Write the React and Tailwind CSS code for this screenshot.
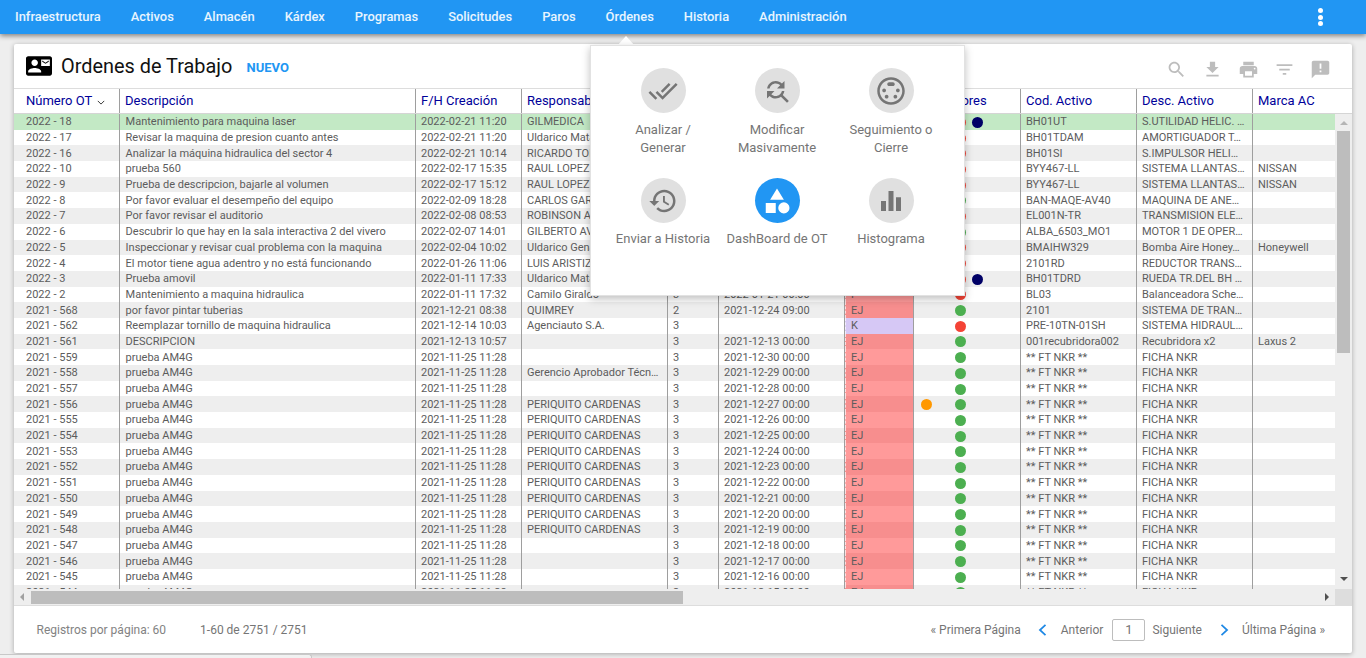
import React from "react";

const P = {
  doneAll: "M18 7l-1.41-1.41-6.34 6.34 1.41 1.41L18 7zm4.24-1.41L11.66 16.17 7.48 12l-1.41 1.41L11.66 19l12-12-1.42-1.41zM.41 13.41L6 19l1.41-1.41L1.83 12 .41 13.41z",
  find: "M11 6c1.38 0 2.63.56 3.54 1.46L12 10h6V4l-2.05 2.05C14.68 4.78 12.93 4 11 4c-3.53 0-6.43 2.61-6.92 6H6.1c.46-2.28 2.48-4 4.9-4zm5.64 9.14c.66-.9 1.12-1.97 1.28-3.14H15.9c-.46 2.28-2.48 4-4.9 4-1.38 0-2.63-.56-3.54-1.46L10 12H4v6l2.05-2.05C7.32 17.22 9.07 18 11 18c1.55 0 2.98-.51 4.14-1.36L20 21.49 21.49 20l-4.85-4.86z",
  svideo: "M8 11.5c0-.83-.67-1.5-1.5-1.5S5 10.67 5 11.5 5.67 13 6.5 13 8 12.33 8 11.5zm7-5c0-.83-.67-1.5-1.5-1.5h-3C9.67 5 9 5.67 9 6.5S9.67 8 10.5 8h3c.83 0 1.5-.67 1.5-1.5zM8.5 15c-.83 0-1.5.67-1.5 1.5S7.67 18 8.5 18s1.5-.67 1.5-1.5S9.33 15 8.5 15zM12 1C5.93 1 1 5.93 1 12s4.93 11 11 11 11-4.93 11-11S18.07 1 12 1zm0 20c-4.96 0-9-4.04-9-9s4.04-9 9-9 9 4.04 9 9-4.04 9-9 9zm5.5-11c-.83 0-1.5.67-1.5 1.5s.67 1.5 1.5 1.5 1.5-.67 1.5-1.5-.67-1.5-1.5-1.5zm-2 5c-.83 0-1.5.67-1.5 1.5s.67 1.5 1.5 1.5 1.5-.67 1.5-1.5-.67-1.5-1.5-1.5z",
  history: "M13 3c-4.97 0-9 4.03-9 9H1l3.89 3.89.07.14L9 12H6c0-3.87 3.13-7 7-7s7 3.13 7 7-3.13 7-7 7c-1.93 0-3.68-.79-4.94-2.06l-1.42 1.42C8.27 19.99 10.51 21 13 21c4.97 0 9-4.03 9-9s-4.03-9-9-9zm-1 5v5l4.28 2.54.72-1.21-3.5-2.08V8H12z",
  category: "M12 2l-5.5 9h11zM17.500 13a4.500 4.500 0 1 0 0 9 4.500 4.500 0 0 0 0-9zM3 13.500h8v8H3z",
  bars: "M10 20h4V4h-4v16zm-6 0h4v-8H4v8zM16 9v11h4V9h-4z",
  search: "M15.5 14h-.79l-.28-.27C15.41 12.59 16 11.11 16 9.5 16 5.91 13.09 3 9.5 3S3 5.91 3 9.5 5.91 16 9.5 16c1.61 0 3.09-.59 4.23-1.57l.27.28v.79l5 4.99L20.49 19l-4.99-5zm-6 0C7.01 14 5 11.99 5 9.5S7.01 5 9.5 5 14 7.01 14 9.5 11.99 14 9.5 14z",
  download: "M19 9h-4V3H9v6H5l7 7 7-7zM5 18v2h14v-2H5z",
  print: "M19 8H5c-1.66 0-3 1.34-3 3v6h4v4h12v-4h4v-6c0-1.66-1.34-3-3-3zm-3 11H8v-5h8v5zm3-7c-.55 0-1-.45-1-1s.45-1 1-1 1 .45 1 1-.45 1-1 1zm-1-9H6v4h12V3z",
  filter: "M10 18h4v-2h-4v2zM3 6v2h18V6H3zm3 7h12v-2H6v2z",
  note: "M20 2H4c-1.1 0-1.99.9-1.99 2L2 22l4-4h14c1.1 0 2-.9 2-2V4c0-1.1-.9-2-2-2zm-7 9h-2V5h2v6zm0 4h-2v-2h2v2z",
  contact: "M21 8V7l-3 2-3-2v1l3 2 3-2zm1-5H2C.9 3 0 3.9 0 5v14c0 1.1.9 2 2 2h20c1.1 0 1.99-.9 1.99-2L24 5c0-1.1-.9-2-2-2zM8 6c1.66 0 3 1.34 3 3s-1.34 3-3 3-3-1.34-3-3 1.34-3 3-3zm6 12H2v-1c0-2 4-3.1 6-3.1s6 1.1 6 3.1v1zm8-6h-8V6h8v6z",
};

const Icon = ({ d, className }) => (
  <svg viewBox="0 0 24 24" className={className} fill="currentColor" aria-hidden="true">
    <path d={d} />
  </svg>
);

const NAV = ["Infraestructura", "Activos", "Almacén", "Kárdex", "Programas", "Solicitudes", "Paros", "Órdenes", "Historia", "Administración"];

const W = ["w-[105px]", "w-[296px]", "w-[106px]", "w-[146px]", "w-[51px]", "w-[126px]", "w-[69px]", "w-[107px]", "w-[116px]", "w-[116px]", "w-[83px]"];

const HEADERS = ["Número OT", "Descripción", "F/H Creación", "Responsable", "Prioridad", "F/H Programada", "Estado", "Indicadores", "Cod. Activo", "Desc. Activo", "Marca AC"];

const top = [
  ["2022 - 18", "Mantenimiento para maquina laser", "2022-02-21 11:20", "GILMEDICA", "BH01UT", "S.UTILIDAD HELIC. …", ""],
  ["2022 - 17", "Revisar la maquina de presion cuanto antes", "2022-02-21 11:20", "Uldarico Matamoros", "BH01TDAM", "AMORTIGUADOR T…", ""],
  ["2022 - 16", "Analizar la máquina hidraulica del sector 4", "2022-02-21 10:14", "RICARDO TORRES", "BH01SI", "S.IMPULSOR HELI…", ""],
  ["2022 - 10", "prueba 560", "2022-02-17 15:35", "RAUL LOPEZ", "BYY467-LL", "SISTEMA LLANTAS…", "NISSAN"],
  ["2022 - 9", "Prueba de descripcion, bajarle al volumen", "2022-02-17 15:12", "RAUL LOPEZ", "BYY467-LL", "SISTEMA LLANTAS…", "NISSAN"],
  ["2022 - 8", "Por favor evaluar el desempeño del equipo", "2022-02-09 18:28", "CARLOS GARCIA", "BAN-MAQE-AV40", "MAQUINA DE ANE…", ""],
  ["2022 - 7", "Por favor revisar el auditorio", "2022-02-08 08:53", "ROBINSON AGUDELO", "EL001N-TR", "TRANSMISION ELE…", ""],
  ["2022 - 6", "Descubrir lo que hay en la sala interactiva 2 del vivero", "2022-02-07 14:01", "GILBERTO AVILA", "ALBA_6503_MO1", "MOTOR 1 DE OPER…", ""],
  ["2022 - 5", "Inspeccionar y revisar cual problema con la maquina", "2022-02-04 10:02", "Uldarico Genaro", "BMAIHW329", "Bomba Aire Honey…", "Honeywell"],
  ["2022 - 4", "El motor tiene agua adentro y no está funcionando", "2022-01-26 11:06", "LUIS ARISTIZABAL", "2101RD", "REDUCTOR TRANS…", ""],
  ["2022 - 3", "Prueba amovil", "2022-01-11 17:33", "Uldarico Matamoros", "BH01TDRD", "RUEDA TR.DEL BH …", ""],
  ["2022 - 2", "Mantenimiento a maquina hidraulica", "2022-01-11 17:32", "Camilo Giraldo", "BL03", "Balanceadora Sche…", ""],
  ["2021 - 568", "por favor pintar tuberias", "2021-12-21 08:38", "QUIMREY", "2101", "SISTEMA DE TRAN…", ""],
  ["2021 - 562", "Reemplazar tornillo de maquina hidraulica", "2021-12-14 10:03", "Agenciauto S.A.", "PRE-10TN-01SH", "SISTEMA HIDRAUL…", ""],
  ["2021 - 561", "DESCRIPCION", "2021-12-13 10:57", "", "001recubridora002", "Recubridora x2", "Laxus 2"],
];
const respTail = ["", "Gerencio Aprobador Técn…", "", "PERIQUITO CARDENAS", "PERIQUITO CARDENAS", "PERIQUITO CARDENAS", "PERIQUITO CARDENAS", "PERIQUITO CARDENAS", "PERIQUITO CARDENAS", "PERIQUITO CARDENAS", "PERIQUITO CARDENAS", "PERIQUITO CARDENAS", "", "", "", ""];
const nums = [559, 558, 557, 556, 555, 554, 553, 552, 551, 550, 549, 548, 547, 546, 545, 544];
const days = [30, 29, 28, 27, 26, 25, 24, 23, 22, 21, 20, 19, 18, 17, 16, 15];

const topDates = {
  11: "2022-01-21 00:00",
  12: "2021-12-24 09:00",
  13: "",
  14: "2021-12-13 00:00",
};
const greenTop = new Set([5, 7, 12, 14]);

const rows = [
  ...top.map((r, i) => ({
    id: r[0], desc: r[1], created: r[2], resp: r[3], code: r[4], asset: r[5], brand: r[6],
    pr: i === 12 ? "2" : "3",
    date: topDates[i] ?? "2022-03-01 00:00",
    state: i === 13 ? "K" : i === 11 ? "F" : "EJ",
    color: greenTop.has(i) ? "g" : "r",
    navy: i === 0 || i === 10,
  })),
  ...nums.map((n, i) => ({
    id: `2021 - ${n}`, desc: "prueba AM4G", created: "2021-11-25 11:28", resp: respTail[i],
    code: "** FT NKR **", asset: "FICHA NKR", brand: "", pr: "3",
    date: `2021-12-${days[i]} 00:00`, state: "EJ", color: "g", orange: n === 556,
  })),
];

const Dot = ({ className }) => <span className={`block h-[11px] w-[11px] shrink-0 rounded-full ${className}`} />;

function Row({ r, i }) {
  const bg = i === 0 ? "bg-[#c3e9c5]" : i % 2 === 0 ? "bg-[#eeeeee]" : "bg-white";
  const stateBg = r.state === "K" ? "bg-[#d6c8f5]" : i % 2 === 0 ? "bg-[#f78e8e]" : "bg-[#ff9a9a]";
  const cell = "flex h-full shrink-0 items-center overflow-hidden whitespace-nowrap border-l border-[#9e9e9e] pl-[5px]";
  return (
    <div className={`flex h-[15.7px] items-center text-[11px] leading-[15px] text-[#5c5c5c] ${bg}`}>
      <div className={`${W[0]} flex h-full shrink-0 items-center whitespace-nowrap pl-[12px]`}>{r.id}</div>
      <div className={`${W[1]} flex h-full shrink-0 items-center overflow-hidden whitespace-nowrap border-l border-[#9e9e9e] pl-[5.6px]`}>{r.desc}</div>
      <div className={`${W[2]} ${cell}`}>{r.created}</div>
      <div className={`${W[3]} ${cell}`}>{r.resp}</div>
      <div className={`${W[4]} ${cell}`}>{r.pr}</div>
      <div className={`${W[5]} ${cell}`}>{r.date}</div>
      <div className={`${W[6]} flex h-full shrink-0 items-center whitespace-nowrap border-l border-[#9e9e9e] ${stateBg}`}>
        <span className="flex h-full w-full items-center border-l border-dashed border-white/70 pl-[5px]">{r.state}</span>
      </div>
      <div className={`${W[7]} flex h-full shrink-0 items-center border-l border-[#9e9e9e] pl-[7px] pt-px`}>
        <span className="w-[11px] shrink-0">{r.orange && <Dot className="bg-[#ff9800]" />}</span>
        <Dot className={`ml-[23px] ${r.color === "g" ? "bg-[#4caf50]" : "bg-[#f44336]"}`} />
        {r.navy && <Dot className="ml-[6px] bg-[#000066]" />}
      </div>
      <div className={`${W[8]} ${cell}`}>{r.code}</div>
      <div className={`${W[9]} ${cell}`}>{r.asset}</div>
      <div className={`${W[10]} ${cell}`}>{r.brand}</div>
    </div>
  );
}

const MENU = [
  { d: P.doneAll, label: ["Analizar /", "Generar"] },
  { d: P.find, label: ["Modificar", "Masivamente"] },
  { d: P.svideo, label: ["Seguimiento o", "Cierre"] },
  { d: P.history, label: ["Enviar a Historia"] },
  { d: P.category, label: ["DashBoard de OT"], active: true },
  { d: P.bars, label: ["Histograma"] },
];

export default function App() {
  return (
    <div className="relative flex h-[658px] w-[1366px] flex-col overflow-hidden bg-[#eeeeee] font-['Roboto',sans-serif]">
      <nav className="relative z-10 flex h-[34px] shrink-0 items-center bg-[#2196f3] shadow-[0_2px_5px_rgba(0,0,0,0.45)]">
        {NAV.map((n) => (
          <span key={n} className="whitespace-nowrap px-[15px] text-[12.9px] font-medium text-white/90">
            {n}
          </span>
        ))}
        <span className="ml-auto mr-[43px] flex flex-col gap-[1.5px]">
          <i className="block h-[5px] w-[5px] rounded-full bg-white" />
          <i className="block h-[5px] w-[5px] rounded-full bg-white" />
          <i className="block h-[5px] w-[5px] rounded-full bg-white" />
        </span>
      </nav>

      <main className="mx-[14px] mt-[10px] flex h-[609px] shrink-0 flex-col overflow-hidden rounded-[2px] bg-white shadow-[0_1px_5px_rgba(0,0,0,0.3)]">
        <header className="flex h-[44px] shrink-0 items-center pl-[12px]">
          <Icon d={P.contact} className="h-[26px] w-[26px] text-black" />
          <h1 className="ml-[9px] mt-px text-[19.9px] font-normal text-[#111]">Ordenes de Trabajo</h1>
          <button className="ml-[14px] mt-[4px] text-[13px] font-bold text-[#2196f3]">NUEVO</button>
          <div className="ml-auto mr-[21.5px] mt-[6px] flex items-center gap-[15px] text-[#bdbdbd]">
            <Icon d={P.search} className="h-[21px] w-[21px]" />
            <Icon d={P.download} className="h-[21px] w-[21px]" />
            <Icon d={P.print} className="h-[21px] w-[21px]" />
            <Icon d={P.filter} className="h-[21px] w-[21px]" />
            <Icon d={P.note} className="h-[21px] w-[21px]" />
          </div>
        </header>

        <div className="flex h-[26px] shrink-0 border-y border-t-[#dddddd] border-b-[#d5d5d5] text-[13px] text-[#000099]">
          {HEADERS.map((h, i) => (
            <div
              key={h}
              className={`${W[i]} flex shrink-0 items-center whitespace-nowrap ${i === 0 ? "pl-[12px]" : "border-l border-[#9e9e9e] pl-[5px]"}`}
            >
              {h}
              {i === 0 && (
                <svg viewBox="0 0 10 6" className="ml-[5px] mt-[2px] h-[5px] w-[8px]" fill="none" stroke="#333" strokeWidth="1.2">
                  <path d="M1 1l4 4 4-4" />
                </svg>
              )}
            </div>
          ))}
        </div>

        <div className="flex h-[475px] shrink-0">
          <div className="w-[1321px] shrink-0 overflow-hidden">
            {rows.map((r, i) => (
              <Row key={r.id} r={r} i={i} />
            ))}
          </div>
          <div className="flex w-[17px] shrink-0 flex-col items-center bg-[#eeeeee]">
            <svg viewBox="0 0 8 4" className="mt-[7px] h-[4px] w-[8px] fill-[#b5b5b5]"><path d="M0 4l4-4 4 4z" /></svg>
            <div className="mt-[6px] h-[222px] w-[13px] bg-[#bdbdbd]" />
            <svg viewBox="0 0 8 4" className="mt-[224px] h-[4px] w-[8px] fill-[#505050]"><path d="M0 0l4 4 4-4z" /></svg>
          </div>
        </div>

        <div className="flex h-[17px] shrink-0 items-center border-b border-[#dddddd] bg-[#eeeeee]">
          <svg viewBox="0 0 4 8" className="ml-[6px] h-[8px] w-[4px] shrink-0 fill-[#a0a0a0]"><path d="M4 0L0 4l4 4z" /></svg>
          <div className="ml-[7px] mt-[1px] h-[13px] w-[652px] shrink-0 bg-[#bdbdbd]" />
          <svg viewBox="0 0 4 8" className="ml-[642px] h-[8px] w-[4px] shrink-0 fill-[#505050]"><path d="M0 0l4 4-4 4z" /></svg>
          <div className="ml-[6px] h-full w-[17px] shrink-0 bg-[#dddddd]" />
        </div>

        <footer className="flex flex-1 items-center text-[12px] text-[#757575]">
          <span className="ml-[22.5px] opacity-90">Registros por página: 60</span>
          <span className="ml-[34px]">1-60 de 2751 / 2751</span>
          <div className="ml-auto mr-[27px] flex items-center">
            <span>« Primera Página</span>
            <svg viewBox="0 0 10 14" className="ml-[17px] h-[12px] w-[9px]" fill="none" stroke="#1e88e5" strokeWidth="2"><path d="M8.5 1L2 7l6.500 6" /></svg>
            <span className="ml-[14px]">Anterior</span>
            <span className="ml-[9px] flex h-[22px] w-[33px] items-center justify-center rounded-[2px] border border-[#bdbdbd] text-[13px]">1</span>
            <span className="ml-[7px]">Siguiente</span>
            <svg viewBox="0 0 10 14" className="ml-[18px] h-[12px] w-[9px]" fill="none" stroke="#1e88e5" strokeWidth="2"><path d="M1.500 1L8 7l-6.500 6" /></svg>
            <span className="ml-[13px]">Última Página »</span>
          </div>
        </footer>
      </main>

      <div className="mt-px h-[6px] w-[312px] shrink-0 rounded-tr-[3px] border-t border-r border-[#c8c8c8] bg-[#f1f1f1]" />

      <div className="absolute left-[617px] top-[36px] z-20 h-0 w-0 border-x-[9px] border-b-[10px] border-x-transparent border-b-white" />
      <div className="absolute left-[590px] top-[45px] z-20 h-[251px] w-[375px] border border-[#e2e2e2] bg-white pl-[15px] pt-[22px] shadow-[0_3px_8px_rgba(0,0,0,0.25)]">
        <div className="grid grid-cols-[114px_114px_114px] grid-rows-[110px_auto]">
          {MENU.map((m) => (
            <div key={m.d} className="flex flex-col items-center">
              <span className={`flex h-[45px] w-[45px] items-center justify-center rounded-full ${m.active ? "bg-[#2196f3] text-white" : "bg-[#e0e0e0] text-[#757575]"}`}>
                <Icon d={m.d} className="h-[30px] w-[30px]" />
              </span>
              <span className={`${m.label.length === 1 ? "mt-[7px]" : "mt-[8px]"} whitespace-nowrap text-center text-[13px] leading-[18px] text-[#757575]`}>
                {m.label.map((l) => (
                  <span key={l} className="block">{l}</span>
                ))}
              </span>
            </div>
          ))}
        </div>
      </div>
    </div>
  );
}
